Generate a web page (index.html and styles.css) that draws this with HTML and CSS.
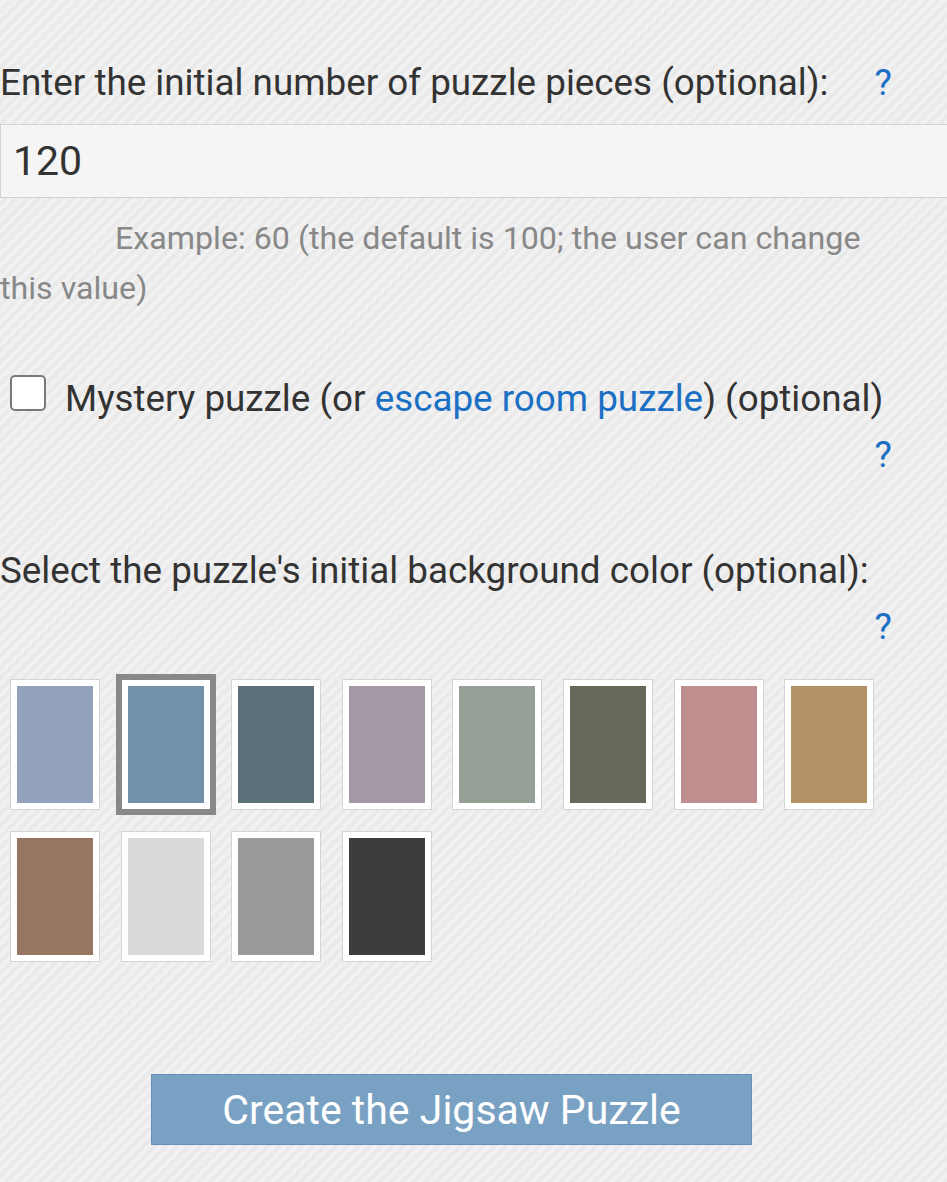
FILE: index.html
```html
<!DOCTYPE html>
<html lang="en">
<head>
<meta charset="utf-8">
<title>Create a Jigsaw Puzzle</title>
<link rel="stylesheet" href="styles.css">
</head>
<body>
<main class="form">
  <div class="field">
    <div class="label-row">
      <label class="label" for="pieces">Enter the initial number of puzzle pieces (optional):</label>
      <a class="help" href="#">?</a>
    </div>
    <input id="pieces" class="text-input" type="text" value="120">
    <p class="hint">Example: 60 (the default is 100; the user can change this value)</p>
  </div>

  <div class="field check-field">
    <label class="check-label">
      <input type="checkbox" class="check">
      <span>Mystery puzzle (or <a href="#" class="link">escape room puzzle</a>) (optional)</span>
    </label>
    <div class="help-line"><a class="help" href="#">?</a></div>
  </div>

  <div class="field color-field">
    <div class="label">Select the puzzle's initial background color (optional):</div>
    <div class="help-line"><a class="help" href="#">?</a></div>
    <div class="swatches">
      <button class="swatch" type="button"><span class="chip c1"></span></button>
      <button class="swatch selected" type="button"><span class="chip c2"></span></button>
      <button class="swatch" type="button"><span class="chip c3"></span></button>
      <button class="swatch" type="button"><span class="chip c4"></span></button>
      <button class="swatch" type="button"><span class="chip c5"></span></button>
      <button class="swatch" type="button"><span class="chip c6"></span></button>
      <button class="swatch" type="button"><span class="chip c7"></span></button>
      <button class="swatch" type="button"><span class="chip c8"></span></button>
      <button class="swatch" type="button"><span class="chip c9"></span></button>
      <button class="swatch" type="button"><span class="chip c10"></span></button>
      <button class="swatch" type="button"><span class="chip c11"></span></button>
      <button class="swatch" type="button"><span class="chip c12"></span></button>
    </div>
  </div>

  <button class="create" type="button">Create the Jigsaw Puzzle</button>
</main>
</body>
</html>
```

FILE: styles.css
```css
html {
  overflow-x: hidden;
}

body {
  margin: 0;
  font-family: Roboto, "Liberation Sans", Arial, sans-serif;
  color: #333;
  background-color: #ebebeb;
  background-image: repeating-linear-gradient(135deg,
    #e8e8e8 0px, #f3f3f3 4px, #e8e8e8 8px);
  min-height: 1182px;
}

.form {
  width: 903px;
  padding-top: 55px;
}

.field {
  margin: 0;
}

.label-row {
  display: flex;
  justify-content: space-between;
  align-items: baseline;
}

.label,
.label-row,
.help-line,
.check-label {
  font-size: 36.8px;
  line-height: 56px;
}

.help {
  color: #1b6fc4;
  text-decoration: none;
  padding-right: 11px;
}

.help-line {
  text-align: right;
}

.text-input {
  display: block;
  box-sizing: border-box;
  width: 960px;
  height: 74px;
  margin-top: 13px;
  padding: 0 12px;
  border: 1px solid #d2d2d2;
  background: #f5f5f5;
  font-family: Roboto, "Liberation Sans", Arial, sans-serif;
  font-size: 41px;
  color: #333;
  outline: none;
}

.hint {
  margin: 15px 0 0;
  font-size: 32.2px;
  line-height: 50px;
  color: #888;
  text-indent: 115px;
}

.check-field {
  margin-top: 58px;
}

.check-label {
  display: flex;
  align-items: flex-start;
}

.check {
  appearance: none;
  -webkit-appearance: none;
  flex: none;
  box-sizing: border-box;
  width: 36px;
  height: 36px;
  margin: 4px 19px 0 10px;
  border: 2px solid #787878;
  border-radius: 5px;
  background: #fff;
}

.link {
  color: #1b6fc4;
  text-decoration: none;
}

.color-field {
  margin-top: 60px;
}

.swatches {
  display: flex;
  flex-wrap: wrap;
  gap: 20.6px;
  margin-top: 23.5px;
  padding-left: 10px;
}

.swatch {
  box-sizing: border-box;
  width: 90px;
  height: 131.5px;
  padding: 6px;
  margin: 0;
  border: 1px solid #d4d4d4;
  background: #fff;
  cursor: pointer;
}

.swatch.selected {
  border-color: #888;
  outline: 5px solid #888;
}

.chip {
  display: block;
  width: 100%;
  height: 100%;
}

.c1 { background: #94a1bb; }
.c2 { background: #7390ab; }
.c3 { background: #5b7079; }
.c4 { background: #a498a4; }
.c5 { background: #97a097; }
.c6 { background: #67685a; }
.c7 { background: #bf8f90; }
.c8 { background: #b39267; }
.c9 { background: #987562; }
.c10 { background: #dadada; }
.c11 { background: #9a9a9a; }
.c12 { background: #3d3d3d; }

.create {
  display: block;
  box-sizing: border-box;
  width: 601px;
  height: 71px;
  margin: 112px auto 0;
  padding: 0;
  border: 1px solid #6490b8;
  background: #79a1c3;
  color: #fff;
  font-family: Roboto, "Liberation Sans", Arial, sans-serif;
  font-size: 41px;
  cursor: pointer;
}
```
